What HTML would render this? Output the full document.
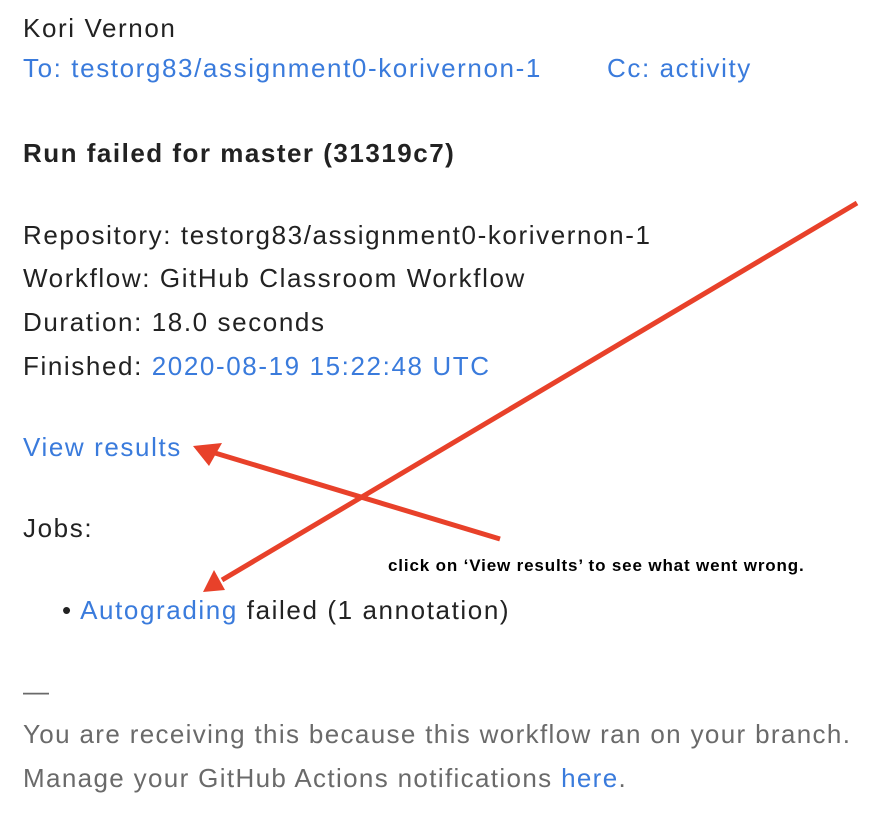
<!DOCTYPE html>
<html><head><style>
body{margin:0;width:880px;height:814px;background:#fff;font-family:"Liberation Sans",Arial,sans-serif;color:#222;position:relative;overflow:hidden}
.t{position:absolute;left:23px;font-size:26px;letter-spacing:1.6px;white-space:nowrap;line-height:30px}
a{color:#3a7bdc;text-decoration:none}
.g{color:#6a6a6a;letter-spacing:1.35px}
</style></head><body>
<div class="t" style="top:13px">Kori Vernon</div>
<div class="t" style="top:53px"><a>To: testorg83/assignment0-korivernon-1</a></div>
<div class="t" style="top:53px;left:607px"><a>Cc: activity</a></div>
<div class="t" style="top:138px;font-weight:bold;letter-spacing:1.5px">Run failed for master (31319c7)</div>
<div class="t" style="top:220px">Repository: testorg83/assignment0-korivernon-1</div>
<div class="t" style="top:263px">Workflow: GitHub Classroom Workflow</div>
<div class="t" style="top:307px">Duration: 18.0 seconds</div>
<div class="t" style="top:351px">Finished: <a>2020-08-19 15:22:48 UTC</a></div>
<div class="t" style="top:432px"><a>View results</a></div>
<div class="t" style="top:513px">Jobs:</div>
<div class="t" style="top:595px;left:62px">• <a>Autograding</a> failed (1 annotation)</div>
<div class="t g" style="top:676px">—</div>
<div class="t g" style="top:719px">You are receiving this because this workflow ran on your branch.</div>
<div class="t g" style="top:763px">Manage your GitHub Actions notifications <a>here</a>.</div>
<div style="position:absolute;left:388px;top:556px;font-size:17px;letter-spacing:0.85px;font-weight:bold;color:#000;white-space:nowrap">click on ‘View results’ to see what went wrong.</div>
<svg width="880" height="814" style="position:absolute;left:0;top:0">
<g stroke="#e8412a" stroke-width="5" fill="#e8412a">
<line x1="500" y1="539" x2="215" y2="453"/>
<line x1="857" y1="203" x2="222" y2="580"/>
</g>
<polygon fill="#e8412a" points="193,446 222,443 209,466"/>
<polygon fill="#e8412a" points="203,592 214,570 225,590"/>
</svg>
</body></html>
